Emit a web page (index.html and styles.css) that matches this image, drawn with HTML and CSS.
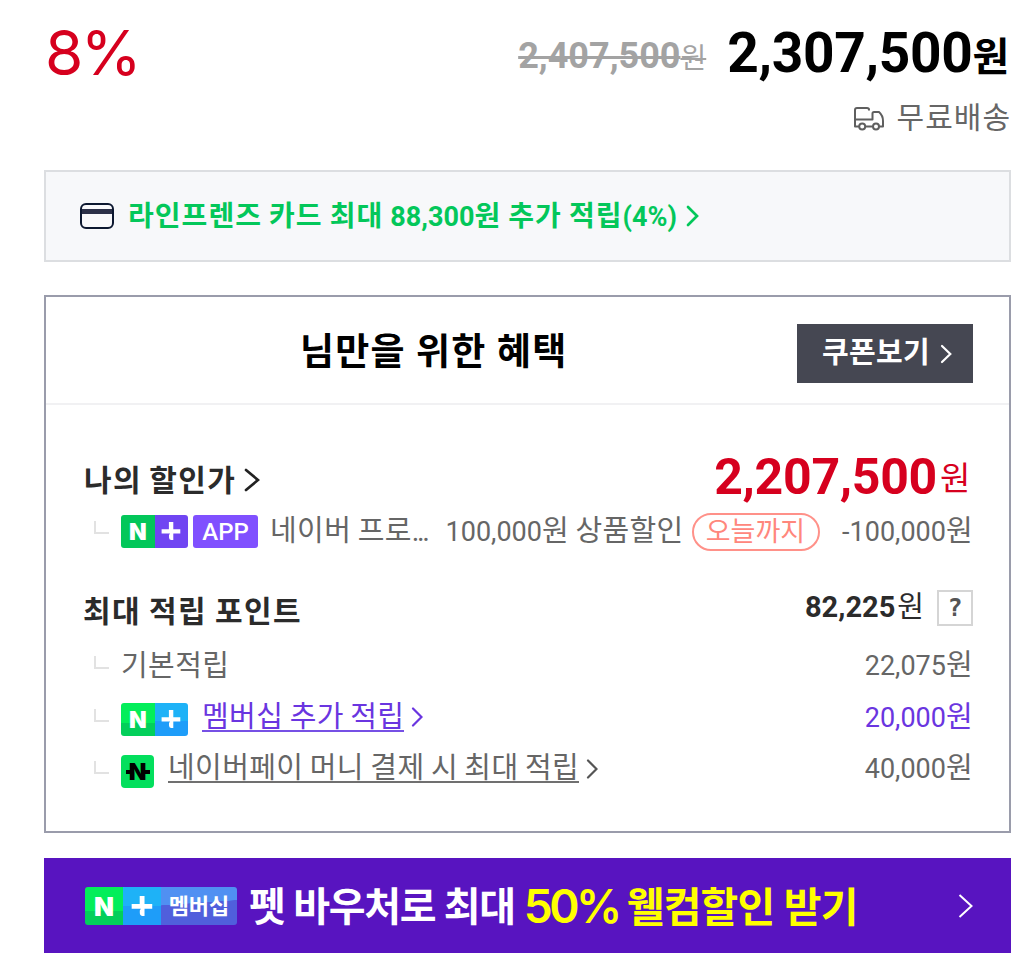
FILE: index.html
```html
<!DOCTYPE html>
<html lang="ko">
<head>
<meta charset="utf-8">
<title>상품 혜택</title>
<link rel="stylesheet" href="styles.css">
</head>
<body>
<main class="page">
  <section class="price">
    <strong class="rate">8%</strong>
    <span class="old"><del class="old-num">2,407,500</del><del class="old-won">원</del></span>
    <strong class="now">2,307,500<span class="now-won">원</span></strong>
  </section>
  <div class="ship">
    <svg class="truck" width="32" height="26" viewBox="0 0 32 26" fill="none" stroke="#5f5f5f" stroke-width="2" stroke-linecap="round" stroke-linejoin="round">
      <path d="M16 3.8Q16 2 14 2H4Q2 2 2 4V20.5H5.5M2 13.5H19.5V7.5Q19.5 6 21 6H26Q30 9.5 30 15V20.5H26.5M13 20.5H19"/>
      <circle cx="9.2" cy="20.5" r="3"/><circle cx="23" cy="20.5" r="3"/>
    </svg>
    <span>무료배송</span>
  </div>

  <a class="card-promo">
    <svg class="card-icon" width="34" height="26" viewBox="0 0 34 26">
      <rect x="1" y="1" width="32" height="24" rx="5" fill="#f9f9fb" stroke="#0d1830" stroke-width="2"/>
      <rect x="2" y="6" width="30" height="5" fill="#2c3048"/>
    </svg>
    <span class="promo-text">라인프렌즈 카드 최대 <span class="num">88,300</span>원 추가 적립<span class="num">(4%)</span></span>
    <svg class="promo-arrow" width="13" height="22" viewBox="0 0 13 22" fill="none" stroke="#03c75a" stroke-width="2.7" stroke-linecap="round"><path d="M2 2L11 11L2 20"/></svg>
  </a>

  <section class="benefit">
    <header class="head">
      <h2 class="title">님만을 위한 혜택</h2>
      <a class="coupon"><span class="coupon-text">쿠폰보기</span><svg width="12" height="20" viewBox="0 0 12 20" fill="none" stroke="#fff" stroke-width="2.2" stroke-linecap="round"><path d="M2 2L10.3 10L2 18"/></svg></a>
    </header>

    <div class="row row-price">
      <h3 class="label">나의 할인가</h3>
      <svg class="label-arrow" width="16" height="24" viewBox="0 0 16 24" fill="none" stroke="#222" stroke-width="2.7" stroke-linecap="round"><path d="M2 2L14 12L2 22"/></svg>
      <strong class="amount final">2,207,500<span class="final-won">원</span></strong>
    </div>
    <div class="row row-app">
      <i class="branch"></i>
      <span class="badge purple"><b class="n">N</b><span class="plus"><svg width="20" height="20" viewBox="0 0 20 20" fill="#fff"><path d="M7.9 1h4.4v7.2h7v4.2h-7V19H10Q8 18.6 8 16.5V14L9 12.400H.6V8.200H7.900z"/></svg></span></span>
      <span class="app">APP</span>
      <span class="txt app-name">네이버 프로<span class="dots">...</span></span>
      <span class="txt app-desc"><span class="num">100,000</span>원 상품할인</span>
      <span class="today">오늘까지</span>
      <span class="amount"><span class="num">-100,000</span>원</span>
    </div>
    <div class="row row-point">
      <h3 class="label point-label">최대 적립 포인트</h3>
      <span class="amount point-total"><b>82,225</b>원</span>
      <span class="help">?</span>
    </div>
    <div class="row row-basic">
      <i class="branch"></i>
      <span class="txt">기본적립</span>
      <span class="amount"><span class="num">22,075</span>원</span>
    </div>
    <div class="row row-member">
      <i class="branch"></i>
      <span class="badge blue"><b class="n">N</b><span class="plus"><svg width="20" height="20" viewBox="0 0 20 20" fill="#fff"><path d="M7.9 1h4.4v7.2h7v4.2h-7V19H10Q8 18.6 8 16.5V14L9 12.400H.6V8.200H7.900z"/></svg></span></span>
      <a class="txt link violet">멤버십 추가 적립</a>
      <svg class="link-arrow" width="12" height="20" viewBox="0 0 12 20" fill="none" stroke="#6a35e0" stroke-width="2.2" stroke-linecap="round"><path d="M2 1.5L10.5 10L2 18.5"/></svg>
      <span class="amount violet"><span class="num">20,000</span>원</span>
    </div>
    <div class="row row-pay">
      <i class="branch"></i>
      <span class="pay"><b class="n">N</b><i class="bar"></i><i class="bar bar-right"></i></span>
      <a class="txt link">네이버페이 머니 결제 시 최대 적립</a>
      <svg class="link-arrow" width="12" height="20" viewBox="0 0 12 20" fill="none" stroke="#555" stroke-width="2.2" stroke-linecap="round"><path d="M2 1.5L10.5 10L2 18.5"/></svg>
      <span class="amount"><span class="num">40,000</span>원</span>
    </div>
  </section>

  <a class="banner">
    <span class="badge member"><b class="n">N</b><span class="plus"><svg width="22" height="22" viewBox="0 0 20 20" fill="#fff"><path d="M7.9 1h4.4v7.2h7v4.2h-7V19H10Q8 18.6 8 16.5V14L9 12.400H.6V8.200H7.900z"/></svg></span><span class="member-text">멤버십</span></span>
    <span class="ban-text">펫 바우처로 최대</span>
    <span class="ban-rate">50%</span>
    <span class="ban-deal">웰컴할인 받기</span>
    <svg class="ban-arrow" width="16" height="24" viewBox="0 0 16 24" fill="none" stroke="#fff" stroke-width="2"><path d="M1.5 1L13.5 12L1.5 23"/></svg>
  </a>
</main>
</body>
</html>
```
FILE: styles.css
```css
* { box-sizing: border-box; }
body {
  margin: 0;
  background: #fff;
  color: #666;
  font-family: Roboto, "Noto Sans CJK KR", sans-serif;
  white-space: nowrap;
}
h2, h3 { margin: 0; }
i { font-style: normal; }
svg { display: block; flex: none; }
.page {
  width: 1028px;
  height: 978px;
  padding: 0 17px 0 44px;
  overflow: hidden;
}

.price { display: flex; align-items: flex-start; height: 96px; padding-right: 2px; }
.rate { margin: 0 auto 0 1px; font: 400 62px/106px Inter, sans-serif; color: #d6001e; letter-spacing: -2.5px; }
.old { margin-right: 21px; color: #a3a3a3; font-size: 36px; font-weight: 700; line-height: 112px; }
.old-num { text-decoration-thickness: 3px; }
.old-won { font-size: 28px; font-weight: 400; text-decoration-thickness: 2px; }
.now { color: #000; font-size: 55px; line-height: 107px; letter-spacing: -0.3px; }
.now-won { position: relative; top: -1px; font-size: 40px; }

.ship { display: flex; justify-content: flex-end; align-items: center; height: 44px; font-size: 30px; line-height: 44px; letter-spacing: 1px; }
.truck { margin: 2px 12px 0 0; }

.card-promo {
  display: flex;
  align-items: center;
  height: 92px;
  margin-top: 30px;
  padding-left: 34px;
  border: 2px solid #dcdee1;
  background: #f7f8fa;
  color: #03c75a;
}
.promo-text { margin: -5px 9px 0 14px; font-size: 28px; font-weight: 700; letter-spacing: 1.05px; word-spacing: -1px; }
.promo-text .num { font-size: 27px; letter-spacing: 0; }

.benefit { height: 538px; margin-top: 33px; border: 2px solid #9a9cab; }
.head {
  display: flex;
  align-items: center;
  height: 108px;
  margin-bottom: 45px;
  padding: 7px 36px 0 254px;
  border-bottom: 2px solid #f1f1f3;
}
.title { margin-top: -9px; color: #000; font-size: 37px; font-weight: 700; letter-spacing: 1.2px; }
.coupon {
  display: flex;
  align-items: center;
  gap: 10px;
  width: 176px;
  height: 59px;
  margin-left: auto;
  padding-left: 25px;
  background: #454752;
  color: #fff;
  font-size: 29px;
  font-weight: 700;
  letter-spacing: 0.3px;
}
.coupon-text { margin-top: -7px; }

.row { display: flex; align-items: center; padding: 0 36px 0 37px; font-size: 29px; line-height: 40px; letter-spacing: 0.4px; word-spacing: -1.2px; }
.row-price { height: 60px; }
.row-app { height: 42px; margin-bottom: 30px; }
.row-point { height: 56px; }
.row-basic { height: 55px; }
.row-member { height: 52px; }
.row-pay { height: 52px; }
.num { font-size: 27px; letter-spacing: 0; }
.amount { margin-left: auto; }
.row-member .amount { margin-top: -3px; }
.row-pay .amount { margin-top: -5px; }
.label { margin: 1px 0 0 1px; color: #2b2b2b; font-size: 30px; font-weight: 700; letter-spacing: 1.3px; }
.label-arrow { margin-left: 8px; }
.final { margin-right: 3px; color: #d6001e; font-size: 50px; letter-spacing: -0.3px; }
.final-won { position: relative; top: -4px; margin-left: 3px; font-size: 33px; font-weight: 400; }
.point-label { margin: 3px 0 0; letter-spacing: 1.5px; }
.point-total { margin-top: -6px; color: #2b2b2b; letter-spacing: 0; }
.point-total b { margin-right: 2px; }
.help {
  width: 36px;
  height: 36px;
  margin: -4px 0 0 13px;
  border: 2px solid #d5d5d5;
  color: #555;
  font: 700 25px/32px "DejaVu Sans Mono", monospace;
  letter-spacing: 0;
  text-align: center;
}

.branch { flex: none; width: 15px; height: 13px; margin: -7px 12px 0 11px; border: solid #e2e2e2; border-width: 0 0 2px 2px; }
.badge { display: flex; flex: none; width: 67px; height: 33px; border-radius: 3px; overflow: hidden; letter-spacing: 0; }
.n { color: #fff; font-family: Inter, sans-serif; font-weight: 900; }
.badge .n { flex: 1; font-size: 23px; line-height: 34px; text-align: center; background: #03c75a; }
.plus { display: flex; flex: 1; align-items: center; justify-content: center; }
.purple .plus { background: #7045f2; }
.blue .n { background: linear-gradient(#03ee5a 60%, #03cf5a 60%); }
.blue .plus { background: linear-gradient(#1eb2f7 55%, #1e9df9 55%); }
.app { width: 65px; height: 33px; margin: 0 12px 0 5px; border-radius: 3px; background: #8050ff; color: #fff; font-size: 24px; font-weight: 500; line-height: 35px; text-align: center; letter-spacing: 0; }
.dots { letter-spacing: -2.4px; }
.app-desc { margin-left: 18px; }
.today { height: 38px; margin: 2px 0 0 8px; padding: 0 13px 0 12px; border: 2px solid #ff9189; border-radius: 19px; color: #ff877c; font-size: 27px; line-height: 34px; letter-spacing: 0; }
.link { margin: -2px 0 0 14px; border-bottom: 2px solid #707070; line-height: 25px; }
.row-pay .link { margin-top: -3px; }
.link-arrow { margin: -4px 0 0 7px; }
.violet { color: #6a35e0; border-color: #7650e5; }
.pay { position: relative; flex: none; width: 33px; height: 33px; border-radius: 4px; background: #03df5d; }
.pay .n { display: block; color: #000; font-size: 23px; line-height: 34px; text-align: center; letter-spacing: 0; }
.bar { position: absolute; left: 5px; top: 15px; width: 7px; height: 4px; background: #000; }
.bar-right { left: 22px; }

.banner { display: flex; align-items: center; height: 95px; margin-top: 25px; padding: 0 37px 0 41px; background: #5814c0; color: #fff; font-size: 40px; font-weight: 700; letter-spacing: -1.3px; }
.member { width: 152px; height: 38px; letter-spacing: 0; }
.member .n { flex: 0 0 38px; font-size: 26px; line-height: 39px; background: linear-gradient(#03ee5a 62%, #03cf5a 62%); }
.member .plus { flex: 0 0 38px; background: linear-gradient(#1eb2f7 50%, #1e9df9 50%); }
.member-text { flex: 1; background: linear-gradient(176deg, #5090f2 42%, #505fdc 43%); font-size: 22px; font-weight: 700; line-height: 39px; text-align: center; }
.ban-text { margin: -4px 0 0 12px; }
.ban-rate { margin-left: 9px; color: #ff0; font: 600 46px/60px Inter, sans-serif; letter-spacing: -3.5px; }
.ban-deal { margin: -4px 0 0 8px; color: #ff0; font-size: 41px; letter-spacing: -0.8px; }
.ban-arrow { margin-left: auto; }
```
